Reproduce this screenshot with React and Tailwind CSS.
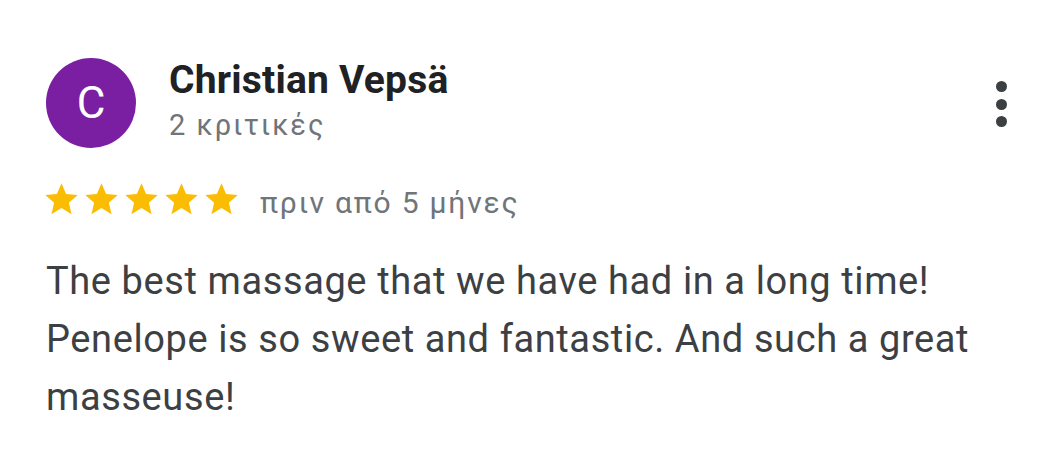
function Star() {
  return (
    <svg viewBox="0 0 24 24" className="h-[39px] w-[39px]" fill="#fbbc04">
      <path d="M12 17.27 18.18 21l-1.64-7.03L22 9.24l-7.19-.61L12 2 9.19 8.63 2 9.24l5.46 4.73L5.82 21z" />
    </svg>
  )
}

export default function App() {
  return (
    <div className="h-[455px] w-[1060px] bg-white pl-[46px] pr-[40px] font-['Roboto',sans-serif]">
      <div className="flex items-start pt-[58px]">
        <div className="flex h-[90px] w-[90px] shrink-0 items-center justify-center rounded-full bg-[#7b1fa2] text-[44px] leading-none text-white">
          C
        </div>
        <div className="ml-[33px] -mt-[1px] flex-1">
          <p className="text-[39px] font-bold leading-[46px] tracking-[0.2px] text-[#202124]">Christian Vepsä</p>
          <p className="mt-[5px] text-[29px] leading-[34px] tracking-[2px] text-[#70757a]">2 κριτικές</p>
        </div>
        <div className="mr-[13px] mt-[23px] flex flex-col items-center gap-[6.5px]">
          <span className="h-[11px] w-[11px] rounded-full bg-[#3c4043]" />
          <span className="h-[11px] w-[11px] rounded-full bg-[#3c4043]" />
          <span className="h-[11px] w-[11px] rounded-full bg-[#3c4043]" />
        </div>
      </div>

      <div className="mt-[32px] flex items-start">
        <div className="-ml-[4px] flex gap-[1px]">
          <Star />
          <Star />
          <Star />
          <Star />
          <Star />
        </div>
        <span className="ml-[19px] mt-[6px] text-[30px] leading-[34px] tracking-[1.8px] text-[#70757a]">
          πριν από 5 μήνες
        </span>
      </div>

      <p className="mt-[32px] max-w-[940px] text-[38px] leading-[58px] tracking-[0.6px] text-[#3c4043]">
        The best massage that we have had in a long time! Penelope is so sweet and fantastic. And such a great masseuse!
      </p>
    </div>
  )
}
